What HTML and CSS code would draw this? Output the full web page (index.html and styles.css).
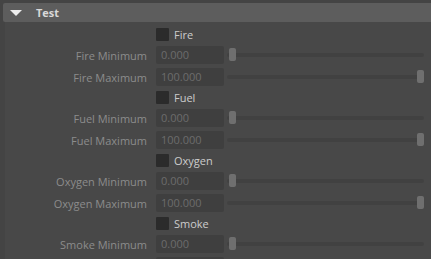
FILE: index.html
```html
<!DOCTYPE html>
<html lang="en">
<head>
    <meta charset="UTF-8">
    <title>Test</title>
    <link rel="stylesheet" href="styles.css">
</head>
<body>
    <div class="frame">
        <div class="section-head">
            <span class="arrow"></span>
            <span class="section-title">Test</span>
        </div>
        <div class="section-body">
            <div class="row check-row"><span></span><label class="check"><span class="box"></span>Fire</label></div>
            <div class="row"><span class="label">Fire Minimum</span><span class="field">0.000</span><div class="slider"><span class="thumb"></span></div></div>
            <div class="row"><span class="label">Fire Maximum</span><span class="field">100.000</span><div class="slider max"><span class="thumb"></span></div></div>

            <div class="row check-row"><span></span><label class="check"><span class="box"></span>Fuel</label></div>
            <div class="row"><span class="label">Fuel Minimum</span><span class="field">0.000</span><div class="slider"><span class="thumb"></span></div></div>
            <div class="row"><span class="label">Fuel Maximum</span><span class="field">100.000</span><div class="slider max"><span class="thumb"></span></div></div>

            <div class="row check-row"><span></span><label class="check"><span class="box"></span>Oxygen</label></div>
            <div class="row"><span class="label">Oxygen Minimum</span><span class="field">0.000</span><div class="slider"><span class="thumb"></span></div></div>
            <div class="row"><span class="label">Oxygen Maximum</span><span class="field">100.000</span><div class="slider max"><span class="thumb"></span></div></div>

            <div class="row check-row"><span></span><label class="check"><span class="box"></span>Smoke</label></div>
            <div class="row"><span class="label">Smoke Minimum</span><span class="field">0.000</span><div class="slider"><span class="thumb"></span></div></div>
            <div class="row"><span class="label">Smoke Maximum</span><span class="field">100.000</span><div class="slider max"><span class="thumb"></span></div></div>
        </div>
    </div>
</body>
</html>
```

FILE: styles.css
```css
body {
    margin: 0;
    background-color: #444444;
    font-family: "Open Sans", "Noto Sans", sans-serif;
    font-size: 11px;
    overflow: hidden;
}

.frame {
    padding-top: 3px;
    padding-left: 3px;
}

.section-head {
    height: 19px;
    background-color: #5d5d5d;
    border-radius: 2px 0 0 2px;
    display: flex;
    align-items: center;
}

.arrow {
    width: 0;
    height: 0;
    margin-left: 7px;
    border-left: 6px solid transparent;
    border-right: 6px solid transparent;
    border-top: 6px solid #eeeeee;
}

.section-title {
    margin-left: 14px;
    color: #d8d8d8;
    font-weight: bold;
    font-size: 11px;
}

.section-body {
    margin-left: 2px;
    background-color: #484848;
    padding-top: 3px;
}

.row {
    display: grid;
    grid-template-columns: 142px 68px 1fr;
    column-gap: 9px;
    align-items: center;
    height: 22px;
    padding-right: 7px;
}

.row .slider {
    margin-left: -6px;
}

.check-row {
    height: 19px;
}

.label {
    text-align: right;
    color: #8c8c8c;
}

.field {
    height: 18px;
    line-height: 18px;
    background-color: #3f3f3f;
    border-radius: 2px;
    padding-left: 5px;
    color: #6c6c6c;
    box-sizing: border-box;
}

.check {
    display: flex;
    align-items: center;
    color: #cccccc;
    grid-column: 2 / 4;
}

.box {
    width: 13px;
    height: 13px;
    background-color: #2b2b2b;
    border-radius: 1px;
    margin-right: 5px;
}

.slider {
    position: relative;
    height: 4px;
    background-color: #414141;
    border-radius: 2px;
}

.thumb {
    position: absolute;
    left: 2px;
    top: -5px;
    width: 7px;
    height: 13px;
    background-color: #6f6f6f;
    border-radius: 2px;
}

.slider.max .thumb {
    left: auto;
    right: 0;
}
```
